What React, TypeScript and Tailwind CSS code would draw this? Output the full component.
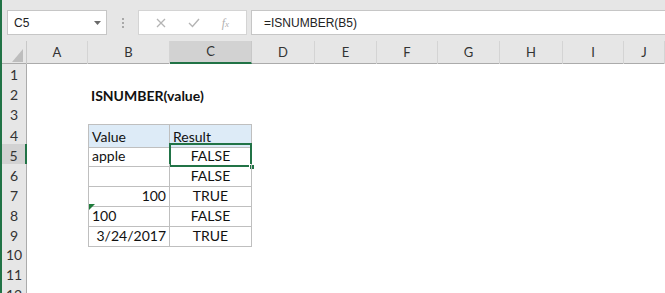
import React from 'react';

type Cell = { text?: string; align?: 'left' | 'right' | 'center'; bold?: boolean; flag?: boolean };

const COLS = ['A', 'B', 'C', 'D', 'E', 'F', 'G', 'H', 'I', 'J'];

// sheet content, keyed by row then column
const DATA: Record<number, Record<string, Cell>> = {
  2: { B: { text: 'ISNUMBER(value)', bold: true } },
  4: { B: { text: 'Value' }, C: { text: 'Result' } },
  5: { B: { text: 'apple' }, C: { text: 'FALSE', align: 'center' } },
  6: { B: {}, C: { text: 'FALSE', align: 'center' } },
  7: { B: { text: '100', align: 'right' }, C: { text: 'TRUE', align: 'center' } },
  8: { B: { text: '100', flag: true }, C: { text: 'FALSE', align: 'center' } },
  9: { B: { text: '3/24/2017', align: 'right' }, C: { text: 'TRUE', align: 'center' } },
};

const gridCols = 'grid grid-cols-[25px_61px_82px_82px_63px_62px_61px_62px_63px_61px_1fr]';

const Toolbar = () => (
  <div className="h-[41px] bg-[#e6e6e6] flex items-start pt-[10px] pl-[5px]">
    {/* Name box */}
    <div className="w-[100px] h-[25px] bg-white border border-[#c6c6c6] flex items-center justify-between pl-[6px] pr-[5px] text-[12px] text-[#222]">
      <span>C5</span>
      <svg width="7" height="4" viewBox="0 0 7 4">
        <path d="M0 0 L7 0 L3.5 4 Z" fill="#6a6a6a" />
      </svg>
    </div>
    {/* grip */}
    <div className="w-[31px] h-[25px] flex flex-col items-center justify-center gap-[2px]">
      <span className="w-[2px] h-[2px] bg-[#a8a8a8]" />
      <span className="w-[2px] h-[2px] bg-[#a8a8a8]" />
      <span className="w-[2px] h-[2px] bg-[#a8a8a8]" />
    </div>
    {/* cancel / enter / fx */}
    <div className="w-[109px] h-[25px] bg-white border border-[#d4d4d4] flex items-center justify-around px-[6px]">
      <svg width="10" height="10" viewBox="0 0 10 10">
        <path d="M1 1 L9 9 M9 1 L1 9" stroke="#b4b4b4" strokeWidth="1.3" />
      </svg>
      <svg width="12" height="10" viewBox="0 0 12 10">
        <path d="M1 5 L4.5 8.5 L11 1" stroke="#b4b4b4" strokeWidth="1.4" fill="none" />
      </svg>
      <span className="font-['Liberation_Serif',serif] italic text-[12px] text-[#b0b0b0] leading-none">
        f<span className="text-[9px]">x</span>
      </span>
    </div>
    {/* formula input */}
    <div className="ml-[4px] flex-1 h-[25px] bg-white border border-[#c6c6c6] border-r-0 flex items-center pl-[12px] text-[12px] text-[#222]">
      =ISNUMBER(B5)
    </div>
  </div>
);

const HeaderRow = () => (
  <div className={`${gridCols} h-[23px] bg-[#e6e6e6] border-b border-[#ababab] font-['Lato',sans-serif]`}>
    <div className="border-r border-[#c8c8c8] relative">
      <svg className="absolute right-[3px] bottom-[2px]" width="11" height="13" viewBox="0 0 11 13">
        <path d="M11 0 L11 13 L0 13 Z" fill="#bdbdbd" />
      </svg>
    </div>
    {COLS.map((c) =>
      c === 'C' ? (
        <div
          key={c}
          className="bg-[#d2d2d2] border-r border-[#c8c8c8] border-b-2 border-b-[#217346] flex items-center justify-center text-[13px] text-[#333] pt-[1px]"
        >
          {c}
        </div>
      ) : (
        <div key={c} className="border-r border-[#d4d4d4] flex items-center justify-center text-[13px] text-[#333]">
          {c}
        </div>
      )
    )}
  </div>
);

const SheetCell = ({ row, col }: { row: number; col: string }) => {
  const cell = DATA[row]?.[col];
  const inTable = (col === 'B' || col === 'C') && row >= 4 && row <= 9;
  const header = inTable && row === 4;
  const cls = [
    'relative flex items-center text-[14px] text-[#111] whitespace-nowrap px-[3px] pt-[1px]',
    inTable ? 'border-r border-b border-[#bfbfbf]' : '',
    inTable && row === 4 ? 'border-t' : '',
    inTable && col === 'B' ? 'border-l' : '',
    header ? 'bg-[#ddebf7]' : '',
    cell?.align === 'right' ? 'justify-end' : cell?.align === 'center' ? 'justify-center' : 'justify-start',
    cell?.bold ? 'font-bold' : '',
  ].join(' ');
  const active = row === 5 && col === 'C';
  return (
    <div className={cls}>
      {cell?.flag && (
        <svg className="absolute left-0 top-0" width="6" height="6" viewBox="0 0 6 6">
          <path d="M0 0 L6 0 L0 6 Z" fill="#1e7b3b" />
        </svg>
      )}
      <span>{cell?.text}</span>
      {active && (
        <>
          <div className="absolute -left-[1px] -top-[1px] -right-[1px] -bottom-[1px] border-2 border-[#217346]" />
          <div className="absolute -right-[4px] -bottom-[4px] w-[6px] h-[6px] bg-[#217346] border border-white" />
        </>
      )}
    </div>
  );
};

const Row = ({ row }: { row: number }) => {
  const selected = row === 5;
  return (
    <div className={`${gridCols} h-[20px] font-['Lato',sans-serif]`}>
      <div
        className={`border-b border-[#d8d8d8] flex items-center justify-center text-[14px] text-[#333] ${
          selected ? 'bg-[#d2d2d2] border-r-2 border-r-[#217346]' : 'bg-[#e6e6e6] border-r border-r-[#ababab]'
        }`}
      >
        {row}
      </div>
      {COLS.map((c) => (
        <SheetCell key={c} row={row} col={c} />
      ))}
    </div>
  );
};

export default function App() {
  const rows = Array.from({ length: 12 }, (_, i) => i + 1);
  return (
    <div className="w-[665px] h-[293px] overflow-hidden bg-white border-l-2 border-[#217346] font-['Liberation_Sans',Arial,sans-serif]">
      <Toolbar />
      <HeaderRow />
      {rows.map((r) => (
        <Row key={r} row={r} />
      ))}
    </div>
  );
}
